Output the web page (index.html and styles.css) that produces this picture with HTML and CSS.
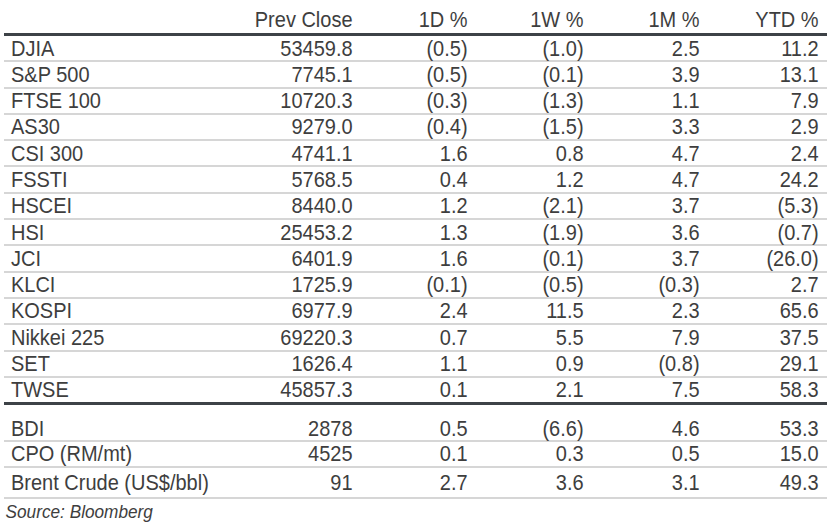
FILE: index.html
```html
<!DOCTYPE html>
<html>
<head>
<meta charset="utf-8">
<link rel="stylesheet" href="styles.css">
</head>
<body>
<div class="tbl">
  <div class="row head">
    <div class="c lbl"></div><div class="c">Prev Close</div><div class="c">1D %</div><div class="c">1W %</div><div class="c">1M %</div><div class="c">YTD %</div>
  </div>
  <div class="row"><div class="c lbl">DJIA</div><div class="c">53459.8</div><div class="c">(0.5)</div><div class="c">(1.0)</div><div class="c">2.5</div><div class="c">11.2</div></div>
  <div class="row"><div class="c lbl">S&amp;P 500</div><div class="c">7745.1</div><div class="c">(0.5)</div><div class="c">(0.1)</div><div class="c">3.9</div><div class="c">13.1</div></div>
  <div class="row"><div class="c lbl">FTSE 100</div><div class="c">10720.3</div><div class="c">(0.3)</div><div class="c">(1.3)</div><div class="c">1.1</div><div class="c">7.9</div></div>
  <div class="row"><div class="c lbl">AS30</div><div class="c">9279.0</div><div class="c">(0.4)</div><div class="c">(1.5)</div><div class="c">3.3</div><div class="c">2.9</div></div>
  <div class="row"><div class="c lbl">CSI 300</div><div class="c">4741.1</div><div class="c">1.6</div><div class="c">0.8</div><div class="c">4.7</div><div class="c">2.4</div></div>
  <div class="row"><div class="c lbl">FSSTI</div><div class="c">5768.5</div><div class="c">0.4</div><div class="c">1.2</div><div class="c">4.7</div><div class="c">24.2</div></div>
  <div class="row"><div class="c lbl">HSCEI</div><div class="c">8440.0</div><div class="c">1.2</div><div class="c">(2.1)</div><div class="c">3.7</div><div class="c">(5.3)</div></div>
  <div class="row"><div class="c lbl">HSI</div><div class="c">25453.2</div><div class="c">1.3</div><div class="c">(1.9)</div><div class="c">3.6</div><div class="c">(0.7)</div></div>
  <div class="row"><div class="c lbl">JCI</div><div class="c">6401.9</div><div class="c">1.6</div><div class="c">(0.1)</div><div class="c">3.7</div><div class="c">(26.0)</div></div>
  <div class="row"><div class="c lbl">KLCI</div><div class="c">1725.9</div><div class="c">(0.1)</div><div class="c">(0.5)</div><div class="c">(0.3)</div><div class="c">2.7</div></div>
  <div class="row"><div class="c lbl">KOSPI</div><div class="c">6977.9</div><div class="c">2.4</div><div class="c">11.5</div><div class="c">2.3</div><div class="c">65.6</div></div>
  <div class="row"><div class="c lbl">Nikkei 225</div><div class="c">69220.3</div><div class="c">0.7</div><div class="c">5.5</div><div class="c">7.9</div><div class="c">37.5</div></div>
  <div class="row"><div class="c lbl">SET</div><div class="c">1626.4</div><div class="c">1.1</div><div class="c">0.9</div><div class="c">(0.8)</div><div class="c">29.1</div></div>
  <div class="row end"><div class="c lbl">TWSE</div><div class="c">45857.3</div><div class="c">0.1</div><div class="c">2.1</div><div class="c">7.5</div><div class="c">58.3</div></div>
  <div class="row first2"><div class="c lbl">BDI</div><div class="c">2878</div><div class="c">0.5</div><div class="c">(6.6)</div><div class="c">4.6</div><div class="c">53.3</div></div>
  <div class="row"><div class="c lbl">CPO (RM/mt)</div><div class="c">4525</div><div class="c">0.1</div><div class="c">0.3</div><div class="c">0.5</div><div class="c">15.0</div></div>
  <div class="row last"><div class="c lbl">Brent Crude (US$/bbl)</div><div class="c">91</div><div class="c">2.7</div><div class="c">3.6</div><div class="c">3.1</div><div class="c">49.3</div></div>
</div>
<div class="source">Source: Bloomberg</div>
</body>
</html>
```

FILE: styles.css
```css
html, body {
  margin: 0;
  padding: 0;
  background: #ffffff;
}
body {
  font-family: "Liberation Sans", Arial, sans-serif;
  color: #3e3e3e;
  font-size: 21.5px;
  line-height: 24px;
}
.tbl {
  margin-left: 4px;
  width: 823px;
}
.row {
  display: grid;
  grid-template-columns: 241px 115px 115px 116px 116px 120px;
  box-sizing: border-box;
  height: 26.3px;
  padding-top: 0.5px;
  border-bottom: 2px solid #d6d6d6;
}
.row.head {
  height: 36px;
  padding-top: 8px;
  border-bottom: 3px solid #3d4247;
}
.row.end {
  height: 27px;
  border-bottom: 3px solid #3d4247;
}
.row.first2 {
  height: 37px;
  padding-top: 12px;
}
.row.last {
  height: 31px;
  padding-top: 3px;
}
.c {
  text-align: right;
  padding-right: 8px;
  white-space: nowrap;
  transform: scaleX(0.93);
  transform-origin: right center;
}
.c:last-child {
  padding-right: 9px;
}
.c.lbl {
  text-align: left;
  padding-left: 7.5px;
  padding-right: 0;
  transform-origin: left center;
}
.source {
  font-style: italic;
  font-size: 18.5px;
  line-height: 20px;
  padding-left: 6px;
  padding-top: 3px;
  transform: scaleX(0.93);
  transform-origin: left center;
}
```
